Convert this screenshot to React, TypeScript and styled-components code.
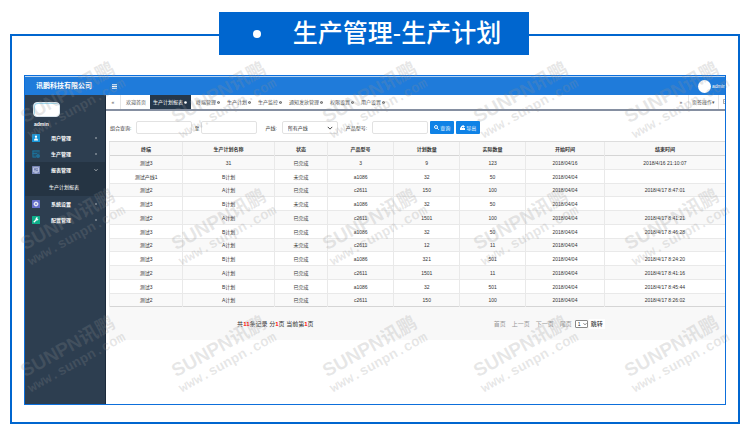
import React from 'react';
import styled, { createGlobalStyle, css } from 'styled-components';

const GlobalStyle = createGlobalStyle`
  *, *::before, *::after { box-sizing: border-box; }
  body {
    margin: 0;
    background: #fff;
    color: #333;
    font-family: "Liberation Sans", "Noto Sans CJK SC", sans-serif;
    font-size: 5px;
    line-height: 8px;
  }
  button, input, select { font: inherit; color: inherit; margin: 0; }
  button { border: 0; padding: 0; background: none; cursor: pointer; white-space: nowrap; }
  a { color: inherit; text-decoration: none; }
  ul { list-style: none; margin: 0; padding: 0; }
`;

const Page = styled.div`
  position: relative;
  display: flex;
  flex-direction: column;
  min-height: 100vh;
  padding: 12px 10px 13px;
  overflow: hidden;
`;

const Title = styled.h1`
  position: relative;
  z-index: 1;
  display: flex;
  align-items: center;
  align-self: center;
  gap: 32px;
  height: 43px;
  margin: 0 2px 0 0;
  padding: 0 28px 0 34px;
  background: #0066cf;
  color: #fff;
  font-size: 25px;
  font-weight: 500;
  line-height: 43px;
  white-space: nowrap;
`;

const Bullet = styled.span`
  width: 8px;
  height: 8px;
  border-radius: 50%;
  background: #fff;
`;

const Frame = styled.main`
  display: flex;
  flex: 1;
  margin-top: -21px;
  padding: 39px 12px 17px;
  border: 2px solid #0066cf;
`;

const AppWindow = styled.div`
  display: flex;
  flex: 1;
  flex-direction: column;
  min-width: 0;
  overflow: hidden;
  border: 1px solid #0d6fdb;
`;

const Header = styled.header`
  display: flex;
  align-items: center;
  height: 19px;
  border-top: 1px solid #b9d4f1;
  background: #1f7bda;
  color: #fff;
`;

const Brand = styled.div`
  width: 80px;
  padding-left: 11px;
  font-size: 7px;
  font-weight: 700;
  line-height: 18px;
  white-space: nowrap;
`;

const MenuToggle = styled.button`
  display: flex;
  margin-left: 7px;
`;

const Account = styled.div`
  display: flex;
  align-items: center;
  gap: 1px;
  width: 27px;
  margin-left: auto;
  font-size: 5px;
  white-space: nowrap;
`;

const Portrait = styled.span`
  flex: none;
  width: 13px;
  height: 13px;
  border-radius: 50%;
  background: #fff;
`;

const Body = styled.div`
  display: flex;
  flex: 1;
`;

const Sidebar = styled.aside`
  flex: none;
  width: 81px;
  padding-top: 7px;
  border-right: 1px solid #1b2a3b;
  background: #2d3e50;
  color: #fff;
`;

const Logo = styled.div`
  width: 27px;
  height: 15px;
  margin-left: 8px;
  border: 1px solid #dbe6ee;
  border-radius: 4px;
  background: #fff;
  box-shadow: inset 1px 1px 0 #9fd8ee;
`;

const UserName = styled.div`
  margin: 3px 0 2px 9px;
  font-weight: 700;
`;

const MenuGroup = styled.li<{ $open?: boolean }>`
  background: ${(p) => (p.$open ? '#253443' : 'transparent')};
`;

const MenuItem = styled.button`
  display: grid;
  grid-template-columns: 8px 1fr 4px;
  align-items: center;
  column-gap: 11px;
  width: 100%;
  height: 16px;
  padding: 0 7px;
  font-weight: 700;
  text-align: left;
`;

const SubItem = styled.a`
  display: block;
  padding-left: 24px;
  line-height: 18px;
`;

const Content = styled.section`
  flex: 1;
  min-width: 0;
`;

const TabBar = styled.nav`
  display: flex;
  height: 16px;
  border-bottom: 2px solid #858fa1;
  color: #555;
`;

const Tab = styled.button<{ $active?: boolean; $first?: boolean }>`
  display: flex;
  align-items: center;
  gap: 1px;
  padding: 0 4px 0 3px;
  ${(p) => p.$first && css`
    padding: 0 4px 0 5px;
  `}
  ${(p) => p.$active && css`
    margin-right: 2px;
    background: #26384b;
    color: #fff;
  `}
`;

const Scroll = styled.button`
  width: 15px;
  border-right: 1px solid #e6e6e6;
`;

const TabActions = styled.div`
  display: flex;
  margin-left: auto;
`;

const PageActions = styled.button`
  width: 30px;
  border-right: 1px solid #e6e6e6;
`;

const Exit = styled.button`
  width: 6px;
  padding-left: 4px;
  overflow: hidden;
`;

const Filters = styled.form`
  display: flex;
  align-items: center;
  padding: 10px 0 7px 4px;
  white-space: nowrap;
`;

const Field = styled.label<{ $tight?: boolean }>`
  display: flex;
  align-items: center;
  gap: 5px;
  margin-right: ${(p) => (p.$tight ? 2 : 8)}px;
`;

const RangeEnd = styled(Field)`
  gap: 2px;
`;

const inputFrame = css`
  width: 56px;
  height: 13px;
  padding: 0 5px;
  border: 1px solid #e2e2e2;
  border-radius: 2px;
  background: #fff;
  outline: none;
`;

const TextInput = styled.input`
  ${inputFrame}
`;

const SelectWrap = styled.span`
  position: relative;
  display: flex;
  align-items: center;

  svg {
    position: absolute;
    right: 5px;
    pointer-events: none;
  }
`;

const LineSelect = styled.select`
  ${inputFrame}
  appearance: none;
`;

const Action = styled.button`
  display: flex;
  align-items: center;
  justify-content: center;
  gap: 1px;
  width: 24px;
  height: 13px;
  margin-right: 2px;
  border-radius: 1px;
  background: #0f82e6;
  color: #fff;
`;

const TableArea = styled.div`
  padding-left: 3px;
`;

const Table = styled.table`
  width: 100%;
  table-layout: fixed;
  border-collapse: collapse;
  text-align: center;

  th, td {
    height: 14px;
    padding: 0;
    border: solid #e9e9e9;
    border-width: 1px 0 0 1px;
    white-space: nowrap;
  }
  th {
    background: #f8f8f8;
    font-weight: 700;
    border-top-color: #ddd;
  }
  tbody tr:nth-child(odd) { background: #f9f9f9; }
  tbody tr:nth-child(4n + 3) td { height: 13px; }
  tbody tr:first-child td { border-top-color: #d5d5d5; }
  tbody { border-bottom: 1px solid #d5d5d5; }
`;

const Column = styled.col<{ $share?: number }>`
  width: ${(p) => (p.$share ? `${p.$share}%` : 'auto')};
`;

const Footer = styled.footer`
  display: grid;
  grid-template-columns: 54% 1fr;
  align-items: center;
  height: 33px;
  background: #f8f8f8;
  font-size: 6px;
  white-space: nowrap;
`;

const Summary = styled.p`
  margin: 0;
  text-align: center;

  em { color: #f00; font-style: normal; font-weight: 700; }
`;

const Pager = styled.nav`
  display: flex;
  align-items: center;
  gap: 6px;
  padding-left: 52px;
  color: #999;
`;

const PageJump = styled.div`
  display: flex;
  align-items: center;
  gap: 1px;
  margin-left: -3px;
  color: #222;

  svg { right: 1px; }
`;

const PageSelect = styled.select`
  width: 13px;
  height: 8px;
  padding: 0 2px;
  appearance: none;
  border: 1px solid #888;
  border-radius: 1px;
  background: #fff;
  font-size: 5px;
  line-height: 6px;
`;

const JumpButton = styled.button`
  height: 10px;
  padding: 0 2px;
  background: #fff;
`;

const WatermarkLayer = styled.div`
  position: absolute;
  z-index: 2;
  top: 36px;
  left: -4px;
  display: grid;
  grid-template-columns: repeat(5, 151px);
  grid-auto-rows: 127px;
  pointer-events: none;
  user-select: none;
`;

const Watermark = styled.div`
  display: flex;
  flex-direction: column;
  align-items: center;
  justify-content: center;
  color: rgba(145, 145, 145, 0.22);
  transform: rotate(-29deg);
  white-space: nowrap;
`;

const MarkName = styled.span`
  font-size: 19px;
  font-weight: 700;
  line-height: 20px;
`;

const MarkSite = styled.span`
  font-family: "Liberation Mono", monospace;
  font-size: 14px;
  font-weight: 700;
  line-height: 16px;
`;

const Chevron = ({ dir = 'down', size = 4 }: { dir?: 'down' | 'left'; size?: number }) => (
  <svg width={size} height={size} viewBox="0 0 8 8" fill="none" stroke="currentColor" strokeWidth="1.2" aria-hidden="true">
    <path d={dir === 'down' ? 'M1 2.5 4 5.5 7 2.5' : 'M5 2 3 4 5 6'} />
  </svg>
);

const CloseMark = () => (
  <svg width="3" height="3" viewBox="0 0 6 6" aria-hidden="true">
    <circle cx="3" cy="3" r="2.6" fill="currentColor" />
    <path d="M2 2 4 4M4 2 2 4" stroke="#fff" strokeWidth=".6" />
  </svg>
);

type IconName = 'user' | 'produce' | 'report' | 'gear' | 'wrench';

const iconFill: Record<IconName, string> = {
  user: '#1794d6',
  produce: '#24506c',
  report: '#7886b6',
  gear: '#666fcb',
  wrench: '#0fae8b',
};

const MenuIcon = ({ name }: { name: IconName }) => (
  <svg width="8" height="8" viewBox="0 0 16 16" fill="none" stroke="#fff" strokeWidth="1.4" aria-hidden="true">
    <rect width="16" height="16" rx="1" fill={iconFill[name]} stroke="none" />
    {name === 'user' && (
      <>
        <circle cx="8" cy="5.5" r="2.3" fill="#fff" stroke="none" />
        <path d="M4 13c0-6 8-6 8 0z" fill="#fff" stroke="none" />
      </>
    )}
    {name === 'produce' && (
      <>
        <path d="M1 2h14M1 7h9M2 2v12h6" stroke="#1b7ba8" />
        <circle cx="12" cy="12" r="2.5" stroke="#1b8fc4" />
      </>
    )}
    {name === 'report' && <path d="M3 3.5h10v8H3zM5 9h2M9 7h2M5 13.5h6" stroke="#d9def0" />}
    {name === 'gear' && (
      <>
        <circle cx="8" cy="8" r="3" strokeWidth="2" />
        <path d="M8 2.5v2M8 11.5v2M2.5 8h2M11.5 8h2M4 4l1.5 1.5M10.5 10.5 12 12M12 4l-1.5 1.5M5.5 10.5 4 12" />
      </>
    )}
    {name === 'wrench' && (
      <>
        <path d="M3.5 12.5 9 7" strokeWidth="2.4" />
        <path d="M11.5 3A3 3 0 1 0 13 6.5L10.5 6z" fill="#fff" stroke="none" />
      </>
    )}
  </svg>
);

const menu: { label: string; icon: IconName; children?: string[] }[] = [
  { label: '用户管理', icon: 'user' },
  { label: '生产管理', icon: 'produce' },
  { label: '报表管理', icon: 'report', children: ['生产计划报表'] },
  { label: '系统设置', icon: 'gear' },
  { label: '配置管理', icon: 'wrench' },
];

const tabs = ['生产计划报表', '终端管理', '生产计划', '生产监控', '通知发放管理', '权限设置', '用户设置'];

const columns: { title: string; share?: number }[] = [
  { title: '终端', share: 11.9 },
  { title: '生产计划名称', share: 14.9 },
  { title: '状态', share: 8.6 },
  { title: '产品型号', share: 10.8 },
  { title: '计划数量', share: 10.7 },
  { title: '实际数量', share: 10.7 },
  { title: '开始时间', share: 12.8 },
  { title: '结束时间' },
];

const rows = [
  ['测试3', '31', '已完成', '3', '9', '123', '2018/04/16', '2018/4/16 21:10:07'],
  ['测试产线1', 'B计划', '未完成', 'a1086', '32', '50', '2018/04/04', ''],
  ['测试2', 'A计划', '已完成', 'c2611', '150', '100', '2018/04/04', '2018/4/17 8:47:01'],
  ['测试3', 'B计划', '未完成', 'a1086', '32', '50', '2018/04/04', ''],
  ['测试2', 'A计划', '已完成', 'c2611', '1501', '100', '2018/04/04', '2018/4/17 8:41:21'],
  ['测试3', 'B计划', '已完成', 'a1086', '32', '50', '2018/04/04', '2018/4/17 8:46:28'],
  ['测试2', 'A计划', '未完成', 'c2611', '12', '11', '2018/04/04', ''],
  ['测试3', 'B计划', '已完成', 'a1086', '321', '501', '2018/04/04', '2018/4/17 8:24:20'],
  ['测试2', 'A计划', '已完成', 'c2611', '1501', '11', '2018/04/04', '2018/4/17 8:41:16'],
  ['测试3', 'B计划', '已完成', 'a1086', '32', '501', '2018/04/04', '2018/4/17 8:45:44'],
  ['测试2', 'A计划', '已完成', 'c2611', '150', '100', '2018/04/04', '2018/4/17 8:26:02'],
];

export default function App() {
  return (
    <Page>
      <GlobalStyle />
      <Title>
        <Bullet />
        生产管理-生产计划
      </Title>
      <Frame>
        <AppWindow>
          <Header>
            <Brand>讯鹏科技有限公司</Brand>
            <MenuToggle type="button" aria-label="菜单">
              <svg width="5" height="5" viewBox="0 0 10 10" stroke="#fff" strokeWidth="2" aria-hidden="true">
                <path d="M0 1.5h10M0 5h10M0 8.5h10" />
              </svg>
            </MenuToggle>
            <Account>
              <Portrait />
              admin
            </Account>
          </Header>
          <Body>
            <Sidebar>
              <Logo />
              <UserName>admin</UserName>
              <ul>
                {menu.map((item) => (
                  <MenuGroup key={item.label} $open={!!item.children}>
                    <MenuItem type="button">
                      <MenuIcon name={item.icon} />
                      {item.label}
                      <Chevron dir={item.children ? 'down' : 'left'} />
                    </MenuItem>
                    {item.children?.map((child) => (
                      <SubItem key={child} href="#">{child}</SubItem>
                    ))}
                  </MenuGroup>
                ))}
              </ul>
            </Sidebar>
            <Content>
              <TabBar>
                <Scroll type="button">«</Scroll>
                <Tab type="button" $first>欢迎首页</Tab>
                {tabs.map((tab, i) => (
                  <Tab key={tab} type="button" $active={i === 0}>
                    {tab}
                    <CloseMark />
                  </Tab>
                ))}
                <TabActions>
                  <Scroll type="button">»</Scroll>
                  <PageActions type="button">页签操作▾</PageActions>
                  <Exit type="button" aria-label="退出">
                    <svg width="4" height="5" viewBox="0 0 8 10" fill="none" stroke="currentColor" aria-hidden="true">
                      <path d="M6 1H1v8h5M3 5h5" />
                    </svg>
                  </Exit>
                </TabActions>
              </TabBar>
              <Filters onSubmit={(e) => e.preventDefault()}>
                <Field $tight>组合查询:<TextInput /></Field>
                <RangeEnd>至<TextInput /></RangeEnd>
                <Field>
                  产线:
                  <SelectWrap>
                    <LineSelect><option>所有产线</option></LineSelect>
                    <Chevron size={6} />
                  </SelectWrap>
                </Field>
                <Field $tight>产品型号:<TextInput /></Field>
                <Action type="submit">
                  <svg width="5" height="5" viewBox="0 0 10 10" fill="none" stroke="#fff" strokeWidth="1.8" aria-hidden="true">
                    <circle cx="4" cy="4" r="3" />
                    <path d="m6.2 6.2 3.3 3.3" />
                  </svg>
                  查询
                </Action>
                <Action type="button">
                  <svg width="5" height="5" viewBox="0 0 10 10" fill="#fff" aria-hidden="true">
                    <path d="M0 5h2V4c0-2 2-3 4-3V0l4 3-4 3V4C5 4 4 5 4 6h6v4H0z" />
                  </svg>
                  导出
                </Action>
              </Filters>
              <TableArea>
                <Table>
                  <colgroup>
                    {columns.map((c) => <Column key={c.title} $share={c.share} />)}
                  </colgroup>
                  <thead>
                    <tr>{columns.map((c) => <th key={c.title} scope="col">{c.title}</th>)}</tr>
                  </thead>
                  <tbody>
                    {rows.map((row, r) => (
                      <tr key={r}>{row.map((cell, c) => <td key={c}>{cell}</td>)}</tr>
                    ))}
                  </tbody>
                </Table>
                <Footer>
                  <Summary>共<em>11</em>条记录 分<em>1</em>页 当前第<em>1</em>页</Summary>
                  <Pager aria-label="分页">
                    <a href="#">首页</a>
                    <a href="#">上一页</a>
                    <a href="#">下一页</a>
                    <a href="#">尾页</a>
                    <PageJump>
                      <SelectWrap>
                        <PageSelect aria-label="页码"><option>1</option></PageSelect>
                        <Chevron />
                      </SelectWrap>
                      <JumpButton type="button">跳转</JumpButton>
                    </PageJump>
                  </Pager>
                </Footer>
              </TableArea>
            </Content>
          </Body>
        </AppWindow>
      </Frame>
      <WatermarkLayer aria-hidden="true">
        {Array.from({ length: 15 }, (_, i) => (
          <Watermark key={i}>
            <MarkName>SUNPN讯鹏</MarkName>
            <MarkSite>www.sunpn.com</MarkSite>
          </Watermark>
        ))}
      </WatermarkLayer>
    </Page>
  );
}
